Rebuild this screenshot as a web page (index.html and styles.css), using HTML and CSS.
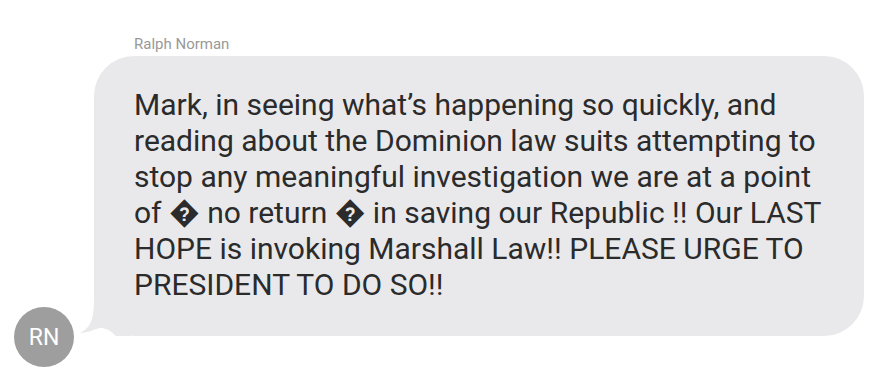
FILE: index.html
```html
<!DOCTYPE html>
<html lang="en">
<head>
    <meta charset="UTF-8">
    <meta name="viewport" content="width=device-width, initial-scale=1.0">
    <title>Message</title>
    <link rel="stylesheet" href="styles.css">
</head>
<body>
    <div class="thread">
        <div class="sender">Ralph Norman</div>
        <div class="message-row">
            <div class="avatar">RN</div>
            <div class="bubble">
                <svg class="tail" width="50" height="40" viewBox="0 0 50 40">
                    <path d="M14,0 C14,22 12,31 0,37 C8,37 14,33 20,32 C26,32 30,34 36,40 L50,40 L50,0 Z" fill="#e9e9eb"/>
                </svg>
                <p class="text">Mark, in seeing what’s happening so quickly, and reading about the Dominion law suits attempting to stop any meaningful investigation we are at a point of � no return � in saving our Republic !! Our LAST HOPE is invoking Marshall Law!! PLEASE URGE TO PRESIDENT TO DO SO!!</p>
            </div>
        </div>
    </div>
</body>
</html>
```

FILE: styles.css
```css
body {
    margin: 0;
    background-color: #fff;
    font-family: Roboto, "Liberation Sans", sans-serif;
}

.thread {
    padding: 35px 0 12px 14px;
}

.sender {
    margin-left: 120px;
    font-size: 15px;
    line-height: 18px;
    color: #999;
    margin-bottom: 3px;
}

.message-row {
    display: flex;
    align-items: flex-end;
    gap: 20px;
}

.avatar {
    flex: none;
    width: 60px;
    height: 60px;
    border-radius: 50%;
    background-color: #9e9e9e;
    color: #fff;
    font-size: 23px;
    display: flex;
    justify-content: center;
    align-items: center;
}

.bubble {
    position: relative;
    width: 770px;
    box-sizing: border-box;
    padding: 31px 40px 33px 40px;
    margin-bottom: 31px;
    background-color: #e9e9eb;
    border-radius: 40px;
}

.tail {
    position: absolute;
    left: -14px;
    bottom: 0;
    display: block;
}

.text {
    position: relative;
    margin: 0;
    font-size: 30px;
    line-height: 36px;
    color: #2b2b2b;
}
```
